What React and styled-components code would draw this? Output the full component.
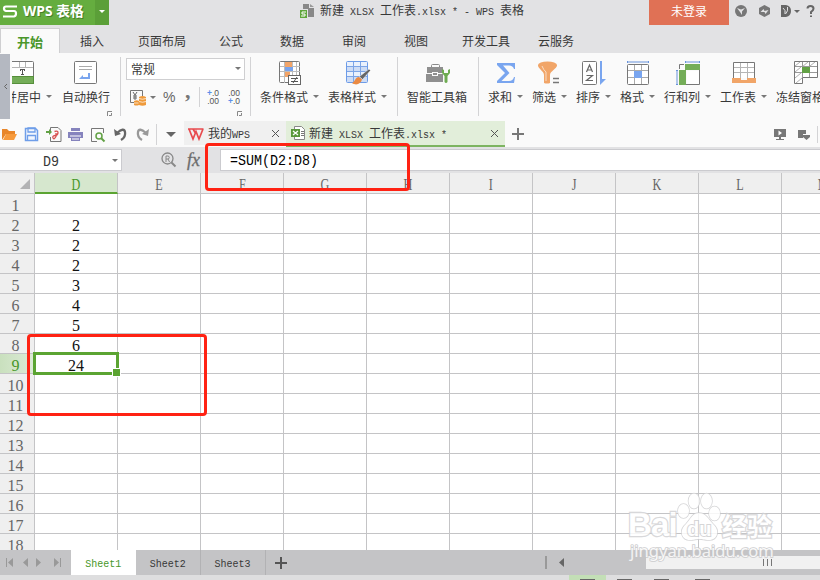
import React from "react";
import styled, { createGlobalStyle, css } from "styled-components";

const CJK = '"Noto Sans CJK SC", sans-serif';

const GlobalStyle = createGlobalStyle`
  * { box-sizing: border-box; }
  body { margin: 0; overflow: hidden; background: #fff; }
  svg { display: block; flex: none; overflow: visible; }
`;

const Window = styled.div`
  position: relative;
  width: 820px;
  height: 580px;
  overflow: hidden;
  display: flex;
  flex-direction: column;
  background: #e2e2e4;
  color: #383838;
  font: 12px/16px "Liberation Sans", ${CJK};
  white-space: pre;
`;

const Mono = styled.span`
  display: inline-block;
  font-family: "Liberation Mono", ${CJK};
  font-size: ${(p) => (p.$large ? "13.33px" : "10px")};
  padding-top: ${(p) => p.$drop || 0}px;
  transform: scaleY(${(p) => (p.$large ? 1.14 : p.$mixed ? 1 : 1.12)});
`;

const Han = styled.span`
  font-family: ${CJK};
  font-size: 12px;
`;

const Caret = styled.i`
  flex: none;
  width: 0;
  height: 0;
  border: solid transparent;
  border-width: ${(p) => (p.$big ? "5px 5px 0" : "3px 3px 0")};
  border-top-color: ${(p) => p.$color || "#777"};
`;

const Spacer = styled.i`
  flex: none;
  width: ${(p) => p.$w}px;
`;

/* Title bar */
const TitleBar = styled.header`
  height: 25px;
  flex: none;
  display: flex;
  align-items: flex-start;
`;
const Brand = styled.div`
  width: 95px;
  height: 25px;
  display: flex;
  align-items: center;
  padding: 0 0 3px 3px;
  gap: 6px;
  background: #65ad3f;
  color: #fff;
  font: bold 13.8px/22px "Open Sans", ${CJK};
  text-shadow: 1px 1px 0 #457f29;
`;
const BrandMenu = styled.div`
  width: 14px;
  height: 25px;
  display: flex;
  justify-content: center;
  padding-top: 10px;
  background: #5b9f38;
`;
const DocTitle = styled.div`
  width: 540px;
  display: flex;
  align-items: center;
  height: 22px;
  padding-left: 191px;
  gap: 6px;
`;
const Login = styled.div`
  width: 80px;
  height: 25px;
  text-align: center;
  line-height: 22px;
  font-family: ${CJK};
  color: #fff;
  background: #e07155;
`;
const WindowTools = styled.div`
  display: flex;
  align-items: center;
  height: 22px;
  padding-left: 6px;
`;

/* Menu */
const Menu = styled.nav`
  height: 28px;
  flex: none;
  display: flex;
  align-items: flex-end;
`;
const MenuItem = styled.div`
  width: ${(p) => p.$w}px;
  height: 25px;
  font: 12px/25px ${CJK};
  ${(p) =>
    p.$active &&
    css`
      padding-left: 16px;
      margin-right: 20px;
      font-weight: 700;
      font-size: 13px;
      color: #4a972b;
      line-height: 25px;
      background: #fafafa;
      border: 1px solid #cfcfd1;
      border-bottom: 0;
    `}
`;

/* Ribbon */
const Ribbon = styled.section`
  height: 68px;
  flex: none;
  display: flex;
  background: #fafafa;
`;
const Handle = styled.div`
  width: 10px;
  height: 65px;
  margin: 1px 2px 0 0;
  display: flex;
  align-items: center;
  justify-content: center;
  background: #b4b8c1;
`;
const Divider = styled.i`
  flex: none;
  width: 1px;
  height: ${(p) => p.$h || 59}px;
  margin: ${(p) => p.$m || "4px 0 0"};
  background: #d3d3d5;
`;
const ToolBox = styled.div`
  flex: none;
  width: ${(p) => p.$w}px;
  padding-top: 8px;
  overflow: ${(p) => (p.$clip ? "hidden" : "visible")};
`;
const ToolIcon = styled.div`
  height: 27px;
  padding-left: ${(p) => p.$x}px;
`;
const ToolLabel = styled.div`
  display: flex;
  align-items: center;
  gap: 5px;
  height: 17px;
  margin-left: ${(p) => p.$shift || 0}px;
  font: 12px/17px ${CJK};
`;
const NumberGroup = styled.div`
  width: 129px;
  padding: 5px 5px 0;
`;
const FormatSelect = styled.div`
  width: 119px;
  height: 22px;
  display: flex;
  align-items: center;
  justify-content: space-between;
  padding: 0 3px 1px 4px;
  border: 1px solid #cfcfd1;
  background: #fff;
  font-family: ${CJK};
`;
const FormatRow = styled.div`
  display: flex;
  align-items: center;
  height: 34px;
  padding-left: 4px;
`;
const Percent = styled.span`
  width: 22px;
  margin-left: 7px;
  font: 14px/16px "Liberation Sans", sans-serif;
  color: #666;
`;
const Comma = styled.span`
  width: 14px;
  height: 22px;
  font: bold 22px/10px "Liberation Serif", serif;
  color: #777;
`;
const Decimals = styled.span`
  margin-left: ${(p) => p.$ml}px;
  width: 14px;
  display: grid;
  justify-items: end;
  font: 8.5px/8px "Liberation Sans", sans-serif;
  color: #555;
  b { color: #5c8fe8; font-weight: 700; }
`;
const CornerRow = styled.div`
  display: flex;
  justify-content: flex-end;
  padding-right: ${(p) => p.$r || 0}px;
  margin-top: ${(p) => p.$t || 0}px;
`;

/* Document tabs */
const DocBar = styled.section`
  height: 26px;
  flex: none;
  display: flex;
  background: #fafafa;
`;
const QuickTools = styled.div`
  width: 184px;
  display: flex;
  align-items: center;
  padding-left: 2px;
  gap: 7px;
`;
const DocTab = styled.div`
  width: ${(p) => (p.$active ? 219 : 102)}px;
  height: ${(p) => (p.$active ? 26 : 24)}px;
  display: flex;
  align-items: center;
  padding: ${(p) => (p.$active ? "0 7px 0 5px" : "1px 7px 0 4px")};
  gap: 4px;
  background: ${(p) => (p.$active ? "#e2eeda" : "#f0f0f0")};
  border-bottom: ${(p) => (p.$active ? "2px solid #7db461" : "0")};
`;
const Push = styled.span`
  flex: 1;
`;
const DocRight = styled.div`
  flex: 1;
  display: flex;
  align-items: center;
  padding: 0 2px 0 7px;
`;

/* Formula bar */
const FormulaBar = styled.section`
  height: 26px;
  flex: none;
  display: flex;
  align-items: flex-start;
  padding-top: 2px;
`;
const NameBox = styled.div`
  width: 122px;
  height: 22px;
  display: flex;
  align-items: center;
  padding: 0 3px 0 43px;
  justify-content: space-between;
  background: #fff;
  border: solid #cbcbcf;
  border-width: 1px 1px 1px 0;
`;
const FormulaTools = styled.div`
  width: 98px;
  height: 21px;
  display: flex;
  align-items: center;
  padding-left: 39px;
  gap: 11px;
`;
const Fx = styled.span`
  font: italic 18px/18px "Liberation Serif", serif;
  color: #6c6c6c;
  -webkit-text-stroke: 0.3px #6c6c6c;
`;
const FormulaInput = styled.div`
  width: 600px;
  height: 22px;
  padding: 3px 0 0 9px;
  color: #000;
  background: #fff;
  border: solid #cbcbcf;
  border-width: 1px 0 1px 1px;
`;

/* Grid */
const Sheet = styled.main`
  height: 377px;
  flex: none;
  overflow: hidden;
  display: grid;
  grid-template-columns: 35px repeat(10, 83px);
  grid-template-rows: 21px;
  grid-auto-rows: 20px;
  background: #fff;
`;
const cellBase = css`
  border: solid #c4c4c6;
  border-width: 0 1px 1px 0;
  text-align: center;
  font-family: "Liberation Serif", serif;
  font-size: 16px;
`;
const Corner = styled.div`
  ${cellBase}
  background: #efefef;
  display: flex;
  justify-content: flex-end;
  padding: 6px 4px 0 0;
`;
const ColHead = styled.div`
  ${cellBase}
  line-height: 23px;
  background: ${(p) => (p.$on ? "#d6e7ce" : "#efefef")};
  color: ${(p) => (p.$on ? "#479729" : "#666")};
  ${(p) => p.$on && "border-bottom: 2px solid #5ba432;"}
  span { display: inline-block; transform: scaleX(0.76); }
`;
const RowHead = styled.div`
  ${cellBase}
  line-height: 24px;
  padding-right: 3px;
  color: ${(p) => (p.$on ? "#479729" : "#666")};
  background: ${(p) => (p.$on ? "linear-gradient(90deg, #c9e0be, #dcead6)" : "#efefef")};
`;
const Cell = styled.div`
  ${cellBase}
  position: relative;
  color: #111;
  line-height: 24px;
`;
const Selection = styled.div`
  position: absolute;
  z-index: 1;
  left: -2px;
  top: -2px;
  width: 86px;
  height: 23px;
  border: 3px solid #5ba432;
  &::after {
    content: "";
    position: absolute;
    right: -5px;
    bottom: -5px;
    width: 7px;
    height: 7px;
    background: #5ba432;
    border: 1px solid #fff;
  }
`;

/* Sheet tabs */
const BottomBar = styled.footer`
  height: 25px;
  flex: none;
  display: flex;
  background: #c4c4c6;
`;
const NavArrows = styled.div`
  width: 71px;
  display: flex;
  align-items: center;
  padding-left: 6px;
`;
const SheetTab = styled.div`
  width: 65px;
  line-height: 26px;
  text-align: center;
  color: ${(p) => (p.$active ? "#479729" : "#383838")};
  background: ${(p) => (p.$active ? "#fff" : "transparent")};
  border-right: ${(p) => (p.$active ? 0 : 1)}px solid #b2b2b4;
`;
const AddSheet = styled.div`
  width: 280px;
  padding: 7px 0 0 9px;
`;
const ScrollArea = styled.div`
  flex: 1;
  display: flex;
  align-items: center;
`;
const Thumb = styled.div`
  width: 174px;
  height: 13px;
  margin-left: 81px;
  padding-left: 117px;
  display: flex;
  align-items: center;
  gap: 3px;
  background: #f1f1f1;
  i { width: 1px; height: 7px; background: #777; }
`;
const StatusBar = styled.div`
  height: 5px;
  flex: none;
  display: flex;
  background: #dededf;
`;
const StatusMode = styled.i`
  width: ${(p) => p.$w}px;
  height: 5px;
  padding: 4px ${(p) => p.$p}px 0;
  background: ${(p) => (p.$on ? "#c3dfb6" : "transparent")};
  &::after { content: ""; display: block; height: 1px; background: #666; }
`;

/* Overlays */
const RedFrame = styled.div`
  position: absolute;
  z-index: 2;
  left: ${(p) => p.$x}px;
  top: ${(p) => p.$y}px;
  width: ${(p) => p.$w}px;
  height: ${(p) => p.$h}px;
  border: 3px solid #ff2213;
  border-radius: 4px;
`;
const Watermark = styled.div`
  position: absolute;
  z-index: 2;
  left: 628px;
  top: 492px;
  width: 148px;
  height: 74px;
  opacity: 0.85;
`;
const MarkRow = styled.div`
  display: flex;
  align-items: flex-end;
  height: 50px;
  color: #fff;
  -webkit-text-stroke: 2.4px #d2d2d4;
  paint-order: stroke fill;
`;
const MarkLatin = styled.span`
  width: 47px;
  font: bold 33px/34px "Liberation Sans", sans-serif;
  letter-spacing: -0.8px;
`;
const MarkHan = styled.span`
  font: bold 25px/34px ${CJK};
  margin-left: 1px;
`;
const MarkUrl = styled.div`
  margin: -2px 0 0 2px;
  font: 16.6px/22px "Noto Sans", sans-serif;
  color: #fbfbfb;
  -webkit-text-stroke: 1.6px #c6c6c8;
  paint-order: stroke fill;
`;

/* Icons */
const Svg = ({ w, h, children }) => (
  <svg width={w} height={h} viewBox={`0 0 ${w} ${h}`} fill="none">
    {children}
  </svg>
);
const G = "#777";
const Frame = ({ x = 0.5, y = 0.5, w = 21, h = 21, fill = "#fff", stroke = G }) => (
  <rect x={x} y={y} width={w} height={h} rx="1" fill={fill} stroke={stroke} />
);

const MergeIcon = () => (
  <Svg w={22} h={23}>
    <Frame x={-2.5} w={24} h={22} />
    <path d="M0 6.5H21M7.5 1v5M13.5 1v5" stroke="#b5b5b5" />
    <path d="M0 15h22v8H0z" fill="#74ad58" />
    <path d="M0 15.5h22M0 22.5h22M21.500 15v8" stroke="#568f3b" />
    <path d="M8 8.5h5M10.5 8v6M9 13.5h3M8.5 8v2M12.5 8v2" stroke="#555" />
  </Svg>
);
const WrapIcon = () => (
  <Svg w={23} h={23}>
    <Frame w={22} h={22} />
    <path d="M5 5.5h13M5 8.5h13" stroke="#aaa" />
    <path d="M5 18l4-4v2h5v-4h2v6z" fill="#7aa5ee" />
  </Svg>
);
const CondIcon = () => (
  <Svg w={23} h={24}>
    <Frame w={20} h={21} />
    <path d="M1 5.500h20M1 10.500h20M1 15.500h20M5.500 1v21M13.500 1v21M17.500 1v21" stroke="#bcbcbc" />
    <path d="M6 1h7v5H6zM6 11h5v5H6z" fill="#f2a468" />
    <path d="M6 6h8v4H6z" fill="#78a3ec" />
    <rect x="9.500" y="14.500" width="12" height="9" fill="#fff" stroke="#666" />
    <path d="M12 17.500h7M12 20.500h7M18 16l-4 6" stroke="#555" />
  </Svg>
);
const StyleIcon = () => (
  <Svg w={25} h={24}>
    <Frame fill="#eaf1fc" stroke="#6c9be8" w={21} h={21} />
    <path d="M1 6h20v5H1zM1 16h20v5H1z" fill="#cddcf5" />
    <path d="M1 5.500h20M1 10.500h20M1 15.500h20M7.500 1v20M14.500 1v20" stroke="#7da5e6" />
    <path d="M23 8l1.500 1.500-8 9-3-3z" fill="#666" stroke="#fafafa" strokeWidth=".5" />
    <path d="M13 16c-4 0-4 5-7 6 4 3 9 1 10-3.500z" fill="#ea8a42" />
  </Svg>
);
const ToolboxIcon = () => (
  <Svg w={24} h={23}>
    <path d="M5.500 7V4.500q0-1 1-1h6q1 0 1 1V7" stroke="#8a8a8a" />
    <path d="M1 6h16v6H1zM0 13h17v8H0z" fill="#8f8f8f" />
    <path d="M6 11h6v4H6z" fill="#fafafa" />
    <path d="M7 12h4v2H7z" fill="#8f8f8f" />
    <path d="M16 8v4l2.500 3v6q1.500 2 3 0v-6l2.500-3V8l-2 1v3h-4V9z" fill="#6eab51" />
  </Svg>
);
const SumIcon = () => (
  <Svg w={19} h={23}>
    <path d="M0 2h18v6h-1q-1-3.500-5-3.500H6l6.500 7.500-8 8h7.500q4 0 5-4h1l-1 6H0v-2l8-8-8-8z" fill="#79a5ef" />
  </Svg>
);
const FilterIcon = () => (
  <Svg w={23} h={23}>
    <ellipse cx="9.500" cy="4" rx="9.500" ry="3.500" fill="#f1a568" />
    <path d="M0 4c0 4 6 6 6 10v8q3 1 6 0v-8c0-4 7-6 7-10z" fill="#f1a568" />
    <path d="M4 5q1.500 4 4 6v9" stroke="#fbe3cf" strokeWidth=".9" />
    <path d="M15 17.500h6M15 21.500h6" stroke="#777" strokeWidth="1.500" />
  </Svg>
);
const SortIcon = () => (
  <Svg w={24} h={24}>
    <Frame w={14} h={23} />
    <path d="M4.500 11L7.500 4 10.500 11M5.500 9h4M4.500 14.500h6l-6 5h6.500" stroke="#666" strokeWidth="1.200" />
    <path d="M19 0v20" stroke="#79a5ef" strokeWidth="2" />
    <path d="M18 24v-6h6z" fill="#79a5ef" />
  </Svg>
);
const FormatIcon = () => (
  <Svg w={23} h={24}>
    <path d="M0 1h22M.5 0v2M21.500 0v2" stroke="#6893db" />
    <Frame y={3.500} h={20} />
    <path d="M1 9.500h20M1 16.500h20M7.500 4v19M14.500 4v19" stroke="#aaa" />
    <path d="M7 10h8v7H7z" fill="#79a5ef" />
  </Svg>
);
const RowColIcon = () => (
  <Svg w={24} h={24}>
    <path d="M9 1h15M9.500 0v2M23.500 0v2M1 9v15M0 9.500h2M0 23.500h2" stroke="#6893db" />
    <path d="M9 3h15v6H9zM3 9h7v15H3z" fill="#74ad58" />
    <path d="M11 10h12v13H11z" fill="#fff" />
    <path d="M3.500 8V3.500H8M23.500 9v14.500H10" stroke="#777" />
  </Svg>
);
const WorksheetIcon = () => (
  <Svg w={24} h={23}>
    <path d="M1.500 17V1.500h21V17" stroke={G} fill="#fff" />
    <path d="M2 6.500h20M2 11.500h20M8.500 2v15M15.500 2v15" stroke="#b5b5b5" />
    <path d="M0 17h9v2h6v-2h9v5H0z" fill="#f1a568" />
  </Svg>
);
const FreezeIcon = () => (
  <Svg w={24} h={23}>
    <path d="M.5.500h23v16h-15v6h-8z" fill="#fff" stroke={G} />
    <path d="M1 5.500h22M1 11.500h22M8.500 1v15M15.500 1v15" stroke="#999" />
    <path d="M1 5l5-4M8 6l6-5M16 5l5-4M1 11l6-5M1 17l6-5M2 22l6-5" stroke="#999" strokeWidth=".8" />
    <path d="M8 6h8v6H8z" fill="#62a145" />
  </Svg>
);
const CornerIcon = () => (
  <Svg w={5} h={5}>
    <path d="M.5 5V.500H5M4.500 2v2.500H2" stroke="#888" />
  </Svg>
);
const CloseIcon = () => (
  <Svg w={7} h={7}>
    <path d="M0 0l7 7M7 0L0 7" stroke="#555" />
  </Svg>
);
const PlusIcon = ({ c = "#777" }) => (
  <Svg w={12} h={12}>
    <path d="M0 6h12M6 0v12" stroke={c} strokeWidth="2" />
  </Svg>
);
const Undo = ({ flip, c }) => (
  <Svg w={15} h={14}>
    <g transform={flip ? "matrix(-1 0 0 1 15 0)" : "translate(2 0)"}>
      <path d="M3 6q7-6 8-1 1 5-4 8" stroke={c} strokeWidth="2.300" />
      <path d="M0 2l1 7 6-2z" fill={c} />
    </g>
  </Svg>
);

const Tool = ({ w, x, icon, label, caret = true, clip, shift, corner }) => (
  <ToolBox $w={w} $clip={clip}>
    <ToolIcon $x={x}>{icon}</ToolIcon>
    <ToolLabel $shift={shift}>
      {label}
      {caret && <Caret />}
    </ToolLabel>
    {corner && (
      <CornerRow $r={8} $t={6}>
        <CornerIcon />
      </CornerRow>
    )}
  </ToolBox>
);

const MENU = [
  ["插入", 58], ["页面布局", 81], ["公式", 61], ["数据", 62], ["审阅", 62], ["视图", 58], ["开发工具", 76], ["云服务", 60],
];
const COLUMNS = ["D", "E", "F", "G", "H", "I", "J", "K", "L", "M"];
const VALUES = { 2: 2, 3: 2, 4: 2, 5: 3, 6: 4, 7: 5, 8: 6, 9: 24 };
const ROWS = Array.from({ length: 18 }, (_, i) => i + 1);

export default function App() {
  return (
    <Window>
      <GlobalStyle />
      <TitleBar>
        <Brand>
          <Svg w={14} h={13}>
            <path d="M14 1.500H3Q1 1.500 1 3.500t2 2.500h8q2 0 2 2.500T11 11.500H0" stroke="#fff" strokeWidth="2.200" />
          </Svg>
          WPS 表格
        </Brand>
        <BrandMenu><Caret $color="#fff" /></BrandMenu>
        <DocTitle>
          <Svg w={14} h={14}>
            <path d="M3 0h6v4h5v9H8V5H3z" fill="#888" />
            <path d="M10 0l4 3h-4z" fill="#999" />
            <path d="M0 6h7v8H0z" fill="#5fa63b" />
            <path d="M6 8H2v2h3v2H1" stroke="#fff" />
          </Svg>
          <Mono $mixed><Han>新建</Han> XLSX <Han>工作表</Han>.xlsx * - WPS <Han>表格</Han></Mono>
        </DocTitle>
        <Login>未登录</Login>
        <WindowTools>
          <Svg w={12} h={12}>
            <circle cx="6" cy="6" r="6" fill="#777" />
            <path d="M2 3l4 1.500L10 3 7 6.500V10L5 7z" fill="#e2e2e4" />
          </Svg>
          <Svg w={34} h={12}>
            <path d="M17.500 0l5.500 3v6l-5.500 3L12 9V3z" fill="#777" />
            <path d="M13.500 7l3-3 1 2 4-1-3 4-1-2z" fill="#e2e2e4" />
          </Svg>
          <Svg w={13} h={12}>
            <path d="M0 0h5q5 1 5 6t-5 6H0z" fill="#666" />
            <path d="M2 3q3 2 2 6M6.500 2q1 4-2 7" stroke="#e2e2e4" />
          </Svg>
          <Caret $color="#666" />
          <Svg w={18} h={12}>
            <path d="M7.500 3.500Q7.500 1 10.500 1t3 2.700Q13.500 5 11 7v2M11 10.500V12" stroke="#666" strokeWidth="2" />
          </Svg>
        </WindowTools>
      </TitleBar>

      <Menu>
        <MenuItem $active $w={60}>开始</MenuItem>
        {MENU.map(([t, w]) => <MenuItem key={t} $w={w}>{t}</MenuItem>)}
      </Menu>

      <Ribbon>
        <Handle>
          <Svg w={3} h={5}><path d="M3 0L.5 2.500 3 5" stroke="#666" /></Svg>
        </Handle>
        <Tool w={50} x={0} icon={<MergeIcon />} label="并居中" clip shift={-7} />
        <Tool w={58} x={12} icon={<WrapIcon />} label="自动换行" caret={false} corner />
        <Divider />
        <NumberGroup>
          <FormatSelect>常规<Caret /></FormatSelect>
          <FormatRow>
            <Svg w={17} h={17}>
              <path d="M12.500 7V1.500H.5v12H5" stroke="#777" />
              <path d="M3 3l2 3 2-3M5 6v5M3 7h4M3 9h4" stroke="#666" />
              <path d="M9 8q3.500-2 7 0v8q-3.500 1.500-7 0zM4 12q3-1.500 5 0v4q-3 1-5 0z" fill="#ef9a3b" />
              <path d="M9 9.500q3.500 1.500 7 0M9 12.500q3.500 1.500 7 0M4 14h4.500" stroke="#fff" strokeWidth=".7" />
            </Svg>
            <Spacer $w={3} />
            <Caret />
            <Percent>%</Percent>
            <Comma>,</Comma>
            <Divider $h={20} $m="0" />
            <Decimals $ml={5}><span><b>+</b>.0</span><span>.00</span></Decimals>
            <Decimals $ml={7}><span>.00</span><span><b>+</b>.0</span></Decimals>
          </FormatRow>
          <CornerRow $r={3} $t={-3}><CornerIcon /></CornerRow>
        </NumberGroup>
        <Divider />
        <Spacer $w={9} />
        <Tool w={68} x={19} icon={<CondIcon />} label="条件格式" />
        <Tool w={69} x={18} icon={<StyleIcon />} label="表格样式" />
        <Divider />
        <Spacer $w={9} />
        <Tool w={71} x={19} icon={<ToolboxIcon />} label="智能工具箱" caret={false} />
        <Divider />
        <Spacer $w={9} />
        <Tool w={44} x={9} icon={<SumIcon />} label="求和" />
        <Tool w={44} x={6} icon={<FilterIcon />} label="筛选" />
        <Tool w={44} x={6} icon={<SortIcon />} label="排序" />
        <Tool w={44} x={7} icon={<FormatIcon />} label="格式" />
        <Tool w={56} x={12} icon={<RowColIcon />} label="行和列" />
        <Tool w={56} x={12} icon={<WorksheetIcon />} label="工作表" />
        <Tool w={44} x={18} icon={<FreezeIcon />} label="冻结窗格" caret={false} />
      </Ribbon>

      <DocBar>
        <QuickTools>
          <Svg w={15} h={13}>
            <path d="M0 12V1h5l2 2h6v3H4z" fill="#e8862a" />
            <path d="M4 6h11l-3 6H1z" fill="#f79a3c" />
          </Svg>
          <Svg w={15} h={15}>
            <path d="M1.500 1.500h10l2 2v10h-12z" fill="#f2f6fd" stroke="#6f9ee9" strokeWidth="1.500" />
            <path d="M4 1h7v4H4zM3.500 14V8.500h8V14" stroke="#6f9ee9" strokeWidth="1.300" />
          </Svg>
          <Svg w={15} h={15}>
            <path d="M4.500 5V.500H12l3 3v11H4.500V10" stroke="#777" />
            <path d="M0 4h3V2l3 3-3 3V6H0z" fill="#62a145" />
            <path d="M8.500 4.500q4-1 3.500 1.500T9 8.500Q6 9 7 11t3-1.500V6" stroke="#d85151" strokeWidth="1.300" />
          </Svg>
          <Svg w={15} h={15}>
            <path d="M3 1h9v3H3zM0 5h15v6H0zM3 10h9v4H3z" fill="#8583bd" />
            <path d="M2 9h11M4 12h7" stroke="#fff" />
          </Svg>
          <Svg w={15} h={15}>
            <path d="M13.500 6V1.500h-12v13H7" stroke="#777" />
            <circle cx="9" cy="9" r="3" stroke="#62a145" strokeWidth="1.500" />
            <path d="M11 11l3.500 3.500" stroke="#62a145" strokeWidth="2" />
          </Svg>
          <Undo c="#666" />
          <Undo c="#999" flip />
          <Divider $h={21} $m="0 2px 0 0" />
          <Caret $big $color="#666" />
        </QuickTools>
        <DocTab>
          <Svg w={16} h={12}>
            <path d="M0 1h15.500M1 1l4 10 3-7.500L11 11l4-10M5 1l3 5" stroke="#e84a4d" strokeWidth="1.700" />
          </Svg>
          <Mono $mixed $drop={1}><Han>我的</Han>WPS</Mono>
          <Push />
          <CloseIcon />
        </DocTab>
        <DocTab $active>
          <Svg w={14} h={14}>
            <path d="M3.500 3V.500h7l3 3v10h-10V11" fill="#fff" stroke="#888" />
            <path d="M10 5.500h3M10 7.500h3M10 9.500h3" stroke="#777" />
            <path d="M0 3h9v8H0z" fill="#59983b" />
            <path d="M2 5l5 4M7 5L2 9" stroke="#fff" strokeWidth="1.300" />
          </Svg>
          <Mono $mixed $drop={2}><Han>新建</Han> XLSX <Han>工作表</Han>.xlsx *</Mono>
          <Push />
          <CloseIcon />
        </DocTab>
        <DocRight>
          <PlusIcon />
          <Push />
          <Svg w={12} h={11}>
            <path d="M0 0h12v8H0zM5 8h2v2h3v1H2v-1h3z" fill="#777" />
            <path d="M4.500 1.500L8 4 4.500 6.500z" fill="#fff" />
          </Svg>
          <Spacer $w={12} />
          <Svg w={12} h={11}>
            <path d="M0 1h8v4H5v4H0zM5 6h7v2l-3.500 3L5 8z" fill="#777" />
          </Svg>
          <Divider $h={17} $m="0 0 0 7px" />
        </DocRight>
      </DocBar>

      <FormulaBar>
        <NameBox><Mono $large $drop={3}>D9</Mono><Caret /></NameBox>
        <FormulaTools>
          <Svg w={15} h={15}>
            <circle cx="6.500" cy="6.500" r="5.500" stroke="#888" strokeWidth="1.300" />
            <path d="M10.500 10.500l4 4" stroke="#888" strokeWidth="2" />
            <path d="M5 10V4h2.500q1.500 1.500 0 3H5m2 0l1.500 3" stroke="#888" />
          </Svg>
          <Fx>fx</Fx>
        </FormulaTools>
        <FormulaInput><Mono $large>=SUM(D2:D8)</Mono></FormulaInput>
      </FormulaBar>

      <Sheet>
        <Corner><Svg w={10} h={10}><path d="M10 0v10H0z" fill="#b2b2b4" /></Svg></Corner>
        {COLUMNS.map((c) => <ColHead key={c} $on={c === "D"}><span>{c}</span></ColHead>)}
        {ROWS.map((r) => (
          <React.Fragment key={r}>
            <RowHead $on={r === 9}>{r}</RowHead>
            {COLUMNS.map((c) => (
              <Cell key={c}>
                {c === "D" ? VALUES[r] : null}
                {c === "D" && r === 9 && <Selection />}
              </Cell>
            ))}
          </React.Fragment>
        ))}
      </Sheet>

      <BottomBar>
        <NavArrows>
          <Svg w={60} h={9}>
            <path d="M.5 0v9M54.500 0v9" stroke="#999" />
            <path d="M7 0v9L2 4.500zM22 0v9l-5-4.500zM30 0v9l5-4.500zM48 0v9l5-4.500z" fill="#999" />
          </Svg>
        </NavArrows>
        <SheetTab $active><Mono>Sheet1</Mono></SheetTab>
        <SheetTab><Mono>Sheet2</Mono></SheetTab>
        <SheetTab><Mono>Sheet3</Mono></SheetTab>
        <AddSheet><PlusIcon c="#555" /></AddSheet>
        <ScrollArea>
          <Svg w={20} h={13}>
            <path d="M1 0v13" stroke="#999" strokeWidth="2" />
            <path d="M19 2v9l-5-4.500z" fill="#666" />
          </Svg>
          <Thumb><i /><i /><i /></Thumb>
        </ScrollArea>
      </BottomBar>
      <StatusBar>
        <Spacer $w={569} />
        <StatusMode $on $w={37} $p={11} />
        <StatusMode $w={37} $p={11} />
        <StatusMode $w={37} $p={11} />
        <StatusMode $w={45} $p={15} />
      </StatusBar>

      <RedFrame $x={205} $y={143} $w={205} $h={48} />
      <RedFrame $x={27} $y={334} $w={180} $h={82} />

      <Watermark>
        <MarkRow>
          <MarkLatin>Bai</MarkLatin>
          <Svg w={46} h={49}>
            <g fill="#fff" stroke="#cfcfd1" strokeWidth="1.500">
              <ellipse cx="8.500" cy="18" rx="5.500" ry="7" />
              <ellipse cx="19" cy="8" rx="5.500" ry="7.500" />
              <ellipse cx="31.500" cy="8" rx="5.500" ry="7.500" />
              <ellipse cx="39.500" cy="20.500" rx="5.500" ry="7" />
              <path d="M24 20c-7 0-8 6-13 11-7 6-5 16 4 16 5 0 5-1 9-1s5 1 10 1c9 0 11-10 4-16-5-5-7-11-14-11z" />
            </g>
            <text x="12" y="43" fontFamily="Liberation Sans" fontWeight="700" fontSize="20" fill="#fff" stroke="#cfcfd1" strokeWidth="2" paintOrder="stroke">du</text>
          </Svg>
          <MarkHan>经验</MarkHan>
        </MarkRow>
        <MarkUrl>jingyan.baidu.com</MarkUrl>
      </Watermark>
    </Window>
  );
}
